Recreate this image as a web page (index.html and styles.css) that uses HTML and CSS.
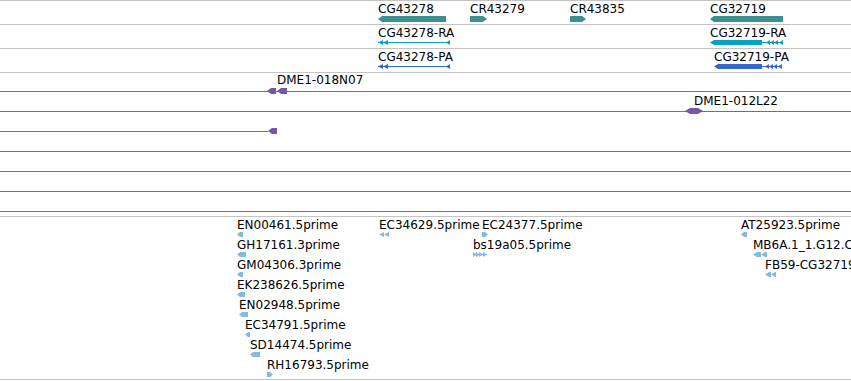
FILE: index.html
```html
<!DOCTYPE html>
<html lang="en">

<head>
    <meta charset="UTF-8">
    <title>Genome browser</title>
    <link rel="stylesheet" href="styles.css">
</head>

<body>
    <div class="browser">
        <!-- genes -->
        <div class="track">
            <div class="feature gene" style="left: 378px">
                <span class="label">CG43278</span>
                <svg width="68" height="6"><polygon points="0,3 4,0 68,0 68,6 4,6"/></svg>
            </div>
            <div class="feature gene" style="left: 470px">
                <span class="label">CR43279</span>
                <svg width="17" height="6"><polygon points="0,0 13,0 17,3 13,6 0,6"/></svg>
            </div>
            <div class="feature gene" style="left: 570px">
                <span class="label">CR43835</span>
                <svg width="16" height="6"><polygon points="0,0 12,0 16,3 12,6 0,6"/></svg>
            </div>
            <div class="feature gene" style="left: 710px">
                <span class="label">CG32719</span>
                <svg width="73" height="6"><polygon points="0,3 4,0 73,0 73,6 4,6"/></svg>
            </div>
        </div>

        <!-- transcripts -->
        <div class="track">
            <div class="feature transcript" style="left: 378px">
                <span class="label">CG43278-RA</span>
                <svg width="72" height="5">
                    <rect x="0" y="2" width="72" height="1"/>
                    <polygon points="0,2.5 5,0 5,5"/>
                    <polygon points="5,2.5 10,0 10,5"/>
                    <polygon points="68,2.5 72,0 72,5"/>
                </svg>
            </div>
            <div class="feature transcript" style="left: 710px">
                <span class="label">CG32719-RA</span>
                <svg width="73" height="5">
                    <polygon points="0,2.5 4,0 52,0 52,5 4,5"/>
                    <rect x="52" y="2" width="21" height="1"/>
                    <polygon points="56,2.5 60,0 60,5"/>
                    <polygon points="60,2.5 64,0 64,5"/>
                    <polygon points="64,2.5 68,0 68,5"/>
                    <polygon points="69,2.5 73,0 73,5"/>
                </svg>
            </div>
        </div>

        <!-- proteins -->
        <div class="track">
            <div class="feature protein" style="left: 378px">
                <span class="label">CG43278-PA</span>
                <svg width="72" height="5">
                    <rect x="0" y="2" width="72" height="1"/>
                    <polygon points="0,2.5 5,0 5,5"/>
                    <polygon points="5,2.5 10,0 10,5"/>
                    <polygon points="68,2.5 72,0 72,5"/>
                </svg>
            </div>
            <div class="feature protein" style="left: 714px">
                <span class="label">CG32719-PA</span>
                <svg width="68" height="5">
                    <polygon points="0,2.5 4,0 48,0 48,5 4,5"/>
                    <rect x="48" y="2" width="20" height="1"/>
                    <polygon points="51,2.5 55,0 55,5"/>
                    <polygon points="55,2.5 59,0 59,5"/>
                    <polygon points="59,2.5 63,0 63,5"/>
                    <polygon points="64,2.5 68,0 68,5"/>
                </svg>
            </div>
        </div>

        <!-- BAC clones -->
        <div class="track clones">
            <div class="lane">
                <span class="clone-label" style="left: 277px; top: 0">DME1-018N07</span>
                <svg class="clone-glyph" style="left: 267px" width="20" height="6">
                    <polygon points="0,3 4,0 9,0 9,6 4,6"/>
                    <polygon points="10,3 14,0 20,0 20,6 14,6"/>
                </svg>
            </div>
            <div class="lane">
                <span class="clone-label" style="left: 694px; top: 2px">DME1-012L22</span>
                <svg class="clone-glyph" style="left: 685px" width="18" height="6">
                    <polygon points="0,3 5,0 13,0 18,3 13,6 5,6"/>
                </svg>
            </div>
            <div class="lane partial">
                <div class="stub" style="width: 268px"></div>
                <svg class="clone-glyph" style="left: 268px" width="9" height="6">
                    <polygon points="0,3 4,0 9,0 9,6 4,6"/>
                </svg>
            </div>
            <div class="lane"></div>
            <div class="lane"></div>
            <div class="lane"></div>
            <div class="lane"></div>
        </div>

        <!-- ESTs -->
        <div class="track ests">
            <div class="feature est" style="left: 237px; top: 1px">
                <span class="label">EN00461.5prime</span>
                <svg width="6" height="5"><polygon points="0,2.5 3,0 6,0 6,5 3,5"/></svg>
            </div>
            <div class="feature est" style="left: 379px; top: 1px">
                <span class="label">EC34629.5prime</span>
                <svg width="10" height="5">
                    <polygon points="0,2.5 5,0 5,5"/>
                    <polygon points="5,2.5 10,0 10,5"/>
                </svg>
            </div>
            <div class="feature est" style="left: 482px; top: 1px">
                <span class="label">EC24377.5prime</span>
                <svg width="6" height="5"><polygon points="0,0 3,0 6,2.5 3,5 0,5"/></svg>
            </div>
            <div class="feature est" style="left: 741px; top: 1px">
                <span class="label">AT25923.5prime</span>
                <svg width="6" height="5"><polygon points="0,2.5 3,0 6,0 6,5 3,5"/></svg>
            </div>

            <div class="feature est" style="left: 237px; top: 21px">
                <span class="label">GH17161.3prime</span>
                <svg width="9" height="5"><polygon points="0,2.5 3,0 9,0 9,5 3,5"/></svg>
            </div>
            <div class="feature est" style="left: 473px; top: 21px">
                <span class="label">bs19a05.5prime</span>
                <svg width="14" height="5">
                    <rect x="0" y="2" width="14" height="1"/>
                    <polygon points="0,0 4,2.5 0,5"/>
                    <polygon points="3,0 7,2.5 3,5"/>
                    <polygon points="6,0 10,2.5 6,5"/>
                    <polygon points="10,0 14,2.5 10,5"/>
                </svg>
            </div>
            <div class="feature est" style="left: 753px; top: 21px">
                <span class="label">MB6A.1_1.G12.CG32719</span>
                <svg width="14" height="5">
                    <polygon points="0,2.5 4,0 8,0 8,5 4,5"/>
                    <polygon points="8,2.5 12,0 14,0 14,5 12,5"/>
                </svg>
            </div>

            <div class="feature est" style="left: 237px; top: 41px">
                <span class="label">GM04306.3prime</span>
                <svg width="6" height="5"><polygon points="0,2.5 3,0 6,0 6,5 3,5"/></svg>
            </div>
            <div class="feature est" style="left: 765px; top: 41px">
                <span class="label">FB59-CG32719.5prime</span>
                <svg width="11" height="5">
                    <polygon points="0,2.5 4,0 6,0 6,5 4,5"/>
                    <polygon points="6,2.5 10,0 11,0 11,5 10,5"/>
                </svg>
            </div>

            <div class="feature est" style="left: 237px; top: 61px">
                <span class="label">EK238626.5prime</span>
                <svg width="8" height="5"><polygon points="0,2.5 3,0 8,0 8,5 3,5"/></svg>
            </div>
            <div class="feature est" style="left: 239px; top: 81px">
                <span class="label">EN02948.5prime</span>
                <svg width="9" height="5"><polygon points="0,2.5 3,0 9,0 9,5 3,5"/></svg>
            </div>
            <div class="feature est" style="left: 245px; top: 101px">
                <span class="label">EC34791.5prime</span>
                <svg width="5" height="5"><polygon points="0,2.5 3,0 5,0 5,5 3,5"/></svg>
            </div>
            <div class="feature est" style="left: 250px; top: 121px">
                <span class="label">SD14474.5prime</span>
                <svg width="10" height="5"><polygon points="0,2.5 3,0 10,0 10,5 3,5"/></svg>
            </div>
            <div class="feature est" style="left: 267px; top: 141px">
                <span class="label">RH16793.5prime</span>
                <svg width="6" height="5"><polygon points="0,0 3,0 6,2.5 3,5 0,5"/></svg>
            </div>
        </div>
    </div>
</body>

</html>
```

FILE: styles.css
```css
body {
    font-family: "DejaVu Sans", Verdana, sans-serif;
    font-size: 12px;
    color: #000;
    background-color: #fff;
    margin: 0;
    overflow: hidden;
}

.browser {
    width: 851px;
}

.track {
    position: relative;
    height: 24px;
    box-sizing: border-box;
    border-top: 1px solid #c4c4c4;
}

.feature {
    position: absolute;
    top: 1px;
    display: flex;
    flex-direction: column;
    align-items: flex-start;
}

.label {
    line-height: 14px;
    white-space: nowrap;
}

.feature svg {
    display: block;
}

.gene svg {
    fill: #3e8f8f;
}

.transcript svg {
    fill: #0aa0c0;
}

.protein svg {
    fill: #3468cc;
}

/* clone track: one purple line per lane */
.clones {
    height: 144px;
    padding-bottom: 4px;
}

.lane {
    position: relative;
    height: 20px;
    box-sizing: border-box;
    border-bottom: 1px solid #7b62ad;
}

.lane:first-child {
    height: 19px;
}

.lane.partial {
    border-bottom-color: transparent;
}

.stub {
    position: absolute;
    left: 0;
    bottom: -1px;
    height: 1px;
    background-color: #7b62ad;
}

.clone-label {
    position: absolute;
    line-height: 14px;
    white-space: nowrap;
}

.clone-glyph {
    position: absolute;
    bottom: -3px;
    display: block;
    fill: #7656a8;
}

.ests {
    height: 164px;
    border-bottom: 1px solid #c4c4c4;
}

.est svg {
    fill: #84bae0;
}
```
